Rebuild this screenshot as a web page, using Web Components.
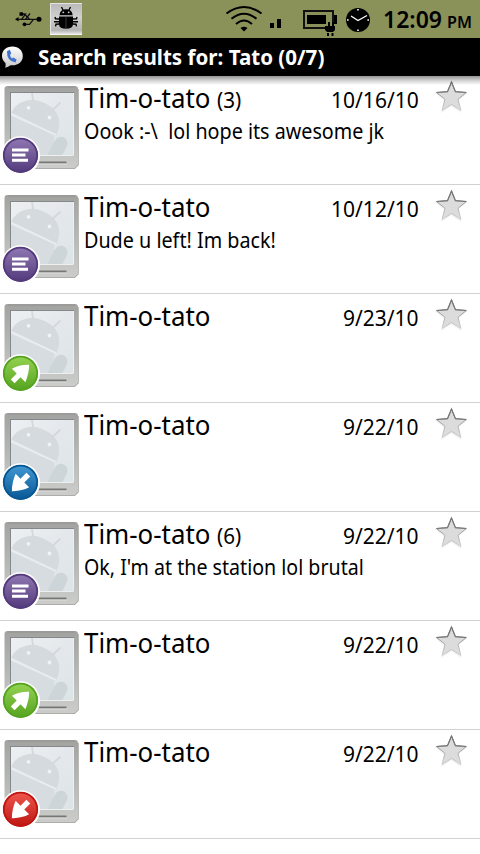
<!DOCTYPE html>
<html lang="en"><head><meta charset="utf-8"><title>Search results</title>
<style>body{margin:0;background:#fff}</style></head><body>
<phone-screen></phone-screen>
<script>
const define=(name,html,setup)=>customElements.define(name,class extends HTMLElement{
  connectedCallback(){
    if(this.shadowRoot)return;
    const t=document.createElement('template');
    t.innerHTML=typeof html==='function'?html(this):html;
    this.attachShadow({mode:'open'}).appendChild(t.content.cloneNode(true));
    if(setup)setup(this);
  }
});

/* One line of text, condensed to the width given in its "w" attribute. */
define('fit-text',e=>`<style>:host{display:inline-block;white-space:pre;width:${e.getAttribute('w')}px}
span{display:inline-block;transform-origin:0 50%}</style><span>${e.getAttribute('text')}</span>`,e=>{
  const s=e.shadowRoot.querySelector('span');
  s.style.transform=`scaleX(${+e.getAttribute('w')/s.offsetWidth})`;
});

define('status-bar',`<style>
:host{display:flex;height:38px;background:#8a9159;color:#000;font-weight:700;box-sizing:border-box}
svg{flex:none;display:block}.time{margin-left:7px;display:flex;align-items:baseline;line-height:38px;font-size:23px;gap:5px;font-weight:650}.pm{font-size:15.5px;font-weight:600}
</style>
<svg width="376" height="38" viewBox="0 0 376 38">
 <defs><linearGradient id="g" x1="0" y1="0" x2="0" y2="1"><stop offset="0" stop-color="#b9b9b9"/><stop offset=".45" stop-color="#d0d0d0"/><stop offset=".85" stop-color="#b4b4b4"/><stop offset="1" stop-color="#f4f4f4"/></linearGradient></defs>
 <g fill="none" stroke="#111" stroke-width="1.3"><path d="M17 19.3H38M21.5 19.3L25.500 14.200H21M25.500 19.300L30 13.500"/><path d="M22 14.200H24.500L29.500 19.300M25 24.300H29.500L33.500 19.300"/></g>
 <path d="M15 19.300L18.500 17V21.600Z"/><circle cx="39" cy="19.300" r="2.500"/><rect x="19.500" y="12.300" width="3.500" height="3.500"/><circle cx="24.500" cy="24.300" r="1.900"/>
 <rect x="50" y="3" width="32" height="32" fill="url(#g)"/><path d="M50.500 35V3.500H82" stroke="#e4e4e4" fill="none"/><path d="M50 34.500H82" stroke="#f5f5f5"/>
 <path d="M59.500 15.200Q60 9.300 66 9.300Q72 9.300 72.700 15.200ZM59 16.500H73V24.500Q72.500 28.800 66 28.800Q59.500 28.800 59 24.500Z"/>
 <path d="M61.500 7L63 10M70.500 7L69 10M59 19L55.500 18.800L55 17M59 21.700H54M59 24L56 24.200L55.500 26.300M73 19L76.500 18.800L77 17M73 21.700H78M73 24L76 24.200L76.500 26.300" stroke="#000" stroke-width="1.400" fill="none"/>
 <path d="M66 17V28.500" stroke="#777" stroke-width=".5"/><circle cx="63.300" cy="12.300" r=".9" fill="#ccc"/><circle cx="68.700" cy="12.300" r=".9" fill="#ccc"/>
 <g fill="none" stroke="#000" stroke-width="2"><path d="M226.500 13.500Q244 .5 261.500 13.500"/><path d="M231.500 18.800Q244 8.700 256.500 18.800"/><path d="M236 24Q244 17 252 24"/></g>
 <path d="M240.500 28Q244 25.500 247.500 28L244 31.500Z"/>
 <path d="M270 23H274V28H270ZM277 19H281V28H277Z"/>
 <rect x="304" y="11" width="29" height="17" fill="none" stroke="#111" stroke-width="2"/><rect x="307" y="15" width="19" height="9"/><rect x="334" y="15" width="3" height="9"/>
 <path d="M328 22H330V26H332V22H334V26H335V30L333 32H327L325 30V26H328Z"/><path d="M327 33H329V36H327ZM331.500 33H333.500V36H331.500Z"/>
 <circle cx="358" cy="20" r="12"/><path d="M351 16L358 20.500L367 15.500" fill="none" stroke="#fff" stroke-width="1.300"/>
 <path d="M357.200 9H358.800V10.600H357.200ZM357.200 29.400H358.800V31H357.200ZM347 19.200H348.600V20.800H347ZM367.400 19.200H369V20.800H367.400Z" fill="#fff"/>
</svg>
<div class="time"><fit-text text="12:09" w="59"></fit-text><fit-text class="pm" text="PM" w="25"></fit-text></div>`);

define('title-bar',`<style>
:host{display:flex;align-items:center;height:38px;background:#000;color:#fff;font-weight:700;font-size:21px;gap:14px}
svg{flex:none}fit-text{line-height:38px}
</style>
<svg width="24" height="38" viewBox="0 0 24 38"><defs><linearGradient id="b" x1="0" y1="0" x2="0" y2="1"><stop offset="0" stop-color="#fff"/><stop offset="1" stop-color="#c8c8c8"/></linearGradient></defs>
<path d="M12.500 8.500C6 8.500 2 12.500 2 18Q2 22 5.500 25Q6 28 5 29.800Q8.500 29 10.500 27.200C18 28 22.800 24 22.800 18C22.800 12.500 18.500 8.500 12.500 8.500Z" fill="url(#b)"/>
<path d="M7 13.200Q6.500 23 15.500 24.500L16.600 21.500L13.300 19.500L12 20.600Q10.300 19 10 16.700L11.300 15.500L9.800 11.700Z" fill="#3f73d0"/></svg>
<fit-text text="Search results for: Tato (0/7)" w="286"></fit-text>`);

const arrow='M-9 5.500L-3.500 0L-8 -4.500Q-1 -8.300 8 -8Q8 0 4.500 8L0 3.500L-5.500 9Z';
const kinds={
 sms:['#8f78b2','#533a7c','<path d="M-8.500 -7H8V-4H-8.500ZM-8.500 -1.900H5V1.100H-8.500ZM-8.500 3.200H7.500V6.200H-8.500Z" fill="#fff"/>'],
 out:['#95d352','#55a320',`<path d="${arrow}" fill="#fff" transform="scale(1.08)"/>`],
 in:['#4399d3','#075794',`<path d="${arrow}" fill="#fff" transform="rotate(180) scale(1.08)"/>`],
 missed:['#f0574e','#be1612',`<path d="${arrow}" fill="#fff" transform="rotate(180) scale(1.08)"/>`]};

define('contact-badge',e=>{const [a,b,glyph]=kinds[e.getAttribute('kind')];return `<style>:host{display:block;width:84px;height:108px}svg{display:block}</style>
<svg width="84" height="108" viewBox="0 0 84 108"><defs>
<linearGradient id="f" x1="0" y1="0" x2="0" y2="1"><stop offset="0" stop-color="#a2a3a0"/><stop offset=".5" stop-color="#b6b8b5"/><stop offset="1" stop-color="#cccdca"/></linearGradient>
<linearGradient id="p" x1="0" y1="0" x2="1" y2="1"><stop offset="0" stop-color="#edf0f2"/><stop offset=".5" stop-color="#e4e8ec"/><stop offset="1" stop-color="#dce4e8"/></linearGradient>
<linearGradient id="c" x1="0" y1="0" x2="0" y2="1"><stop offset="0" stop-color="${a}"/><stop offset="1" stop-color="${b}"/></linearGradient>
<clipPath id="k"><rect x="11" y="17" width="62.500" height="62"/></clipPath></defs>
<path d="M7 92.500H74.500L78 89V13" fill="none" stroke="#8d8e8a" stroke-width="1.200"/>
<path d="M7.500 10H75Q78 10 78 13V89L74.500 92.500H7Q4.500 92.500 4.500 90V13Q4.500 10 7.500 10Z" fill="url(#f)"/>
<path d="M8 11H75" stroke="#999" stroke-width="1.500"/>
<rect x="10.500" y="16.500" width="63" height="63" fill="#fff" stroke="#85888a"/>
<path d="M73.500 17V79.500H11" fill="none" stroke="#eef0f0"/>
<rect x="11" y="17" width="62" height="62" fill="url(#p)"/>
<g clip-path="url(#k)"><path d="M11 37.500Q15 27 27 24.500Q34 22.500 42 26Q57 32 59 44Q60 51 56 60L53.500 58.500L11 37.500Z" fill="#d5dade"/>
<path d="M11 39.500L54.500 59.500Q54 72 48 80H11Z" fill="#d7dce0"/><path d="M11 37.500L56 59" stroke="#e9edf0" stroke-width="1.500"/><path d="M47 80L54 66Q57 60 63 61Q69 64 67 70L62 80Z" fill="#ced5d9"/>
<path d="M33 24L32 17M52.500 34L60 27" stroke="#d3d8dc" stroke-width="1.800" stroke-linecap="round"/>
<circle cx="28.500" cy="31.800" r="1.900" fill="#f0f3f5"/><circle cx="49.500" cy="41.500" r="1.900" fill="#f0f3f5"/></g>
<path d="M35 85.500H66.500V87.500H35Z" fill="#777875"/><path d="M35 88H67" stroke="#ddd"/>
<circle cx="20.500" cy="79.700" r="19.500" fill="#fff"/><circle cx="20.500" cy="79.300" r="17.300" fill="url(#c)"/><circle cx="20.500" cy="79.300" r="16.700" fill="none" stroke="${b}" stroke-width="1.800"/>
<g transform="translate(20.500 79.500)">${glyph}</g></svg>`});

define('star-icon',`<style>:host{display:block;width:34px;height:36px}svg{display:block}</style>
<svg width="34" height="36" viewBox="0 0 34 36"><defs><linearGradient id="s" x1="0" y1="0" x2="0" y2="1"><stop offset="0" stop-color="#626262"/><stop offset=".55" stop-color="#aaa"/><stop offset="1" stop-color="#d0d0d0"/></linearGradient></defs>
<path d="M17 1L21.300 12H33.500L24 20L27.500 32.500L17 25.500L7 32.500L10 20L.5 12H12.500Z" fill="#f2f2f2" transform="translate(0 .8)"/>
<path d="M17.500 2L21.300 11.700L32.300 12.500L24 19.300L27 30.500L17.500 24.500L8 30.500L11 19.300L2.500 12.500L13.500 11.700Z" fill="#dcdcdc" stroke="url(#s)" stroke-width="1"/><path d="M2.500 12.500L13.500 11.700L17.500 2L21.500 11.700L32.300 12.500" fill="none" stroke="#777" stroke-width="1.200"/></svg>`);

define('result-row',e=>{const g=n=>e.getAttribute(n);return `<style>
:host{display:grid;grid-template-columns:84px 335px 1fr;height:108px;border-bottom:1px solid #d2d2d2;color:#000}
.head{display:flex;align-items:baseline;height:42px;line-height:44px;font-size:27px;gap:6px}
.small{font-size:21.500px}.date{margin-left:auto}.body{font-size:21.500px;line-height:25px;height:25px;display:flex}
star-icon{margin:4px 0 0 15px}
</style>
<contact-badge kind="${g('kind')}"></contact-badge>
<div><div class="head"><fit-text text="Tim-o-tato" w="126.5"></fit-text>${g('count')?`<fit-text class="small" text="(${g('count')})" w="24"></fit-text>`:''}<fit-text class="small date" text="${g('date')}" w="${g('date').length>7?88:76}"></fit-text></div>
${g('body')?`<div class="body"><fit-text text="${g('body')}" w="${g('bw')}"></fit-text></div>`:''}</div>
<star-icon></star-icon>`});

define('result-list',`<style>:host{display:block;position:relative;flex:1}
.shade{position:absolute;inset:0 0 auto;height:9px;background:linear-gradient(rgba(0,0,0,.42),rgba(0,0,0,.2) 45%,rgba(0,0,0,0))}</style><slot></slot><div class="shade"></div>`);

define('phone-screen',`<style>:host{display:flex;flex-direction:column;width:480px;height:854px;overflow:hidden;background:#fff;font-family:"Noto Sans","Open Sans",sans-serif}</style>
<status-bar></status-bar><title-bar></title-bar>
<result-list>
<result-row kind="sms" count="3" date="10/16/10" body="Oook :-\\  lol hope its awesome jk" bw="300"></result-row>
<result-row kind="sms" date="10/12/10" body="Dude u left! Im back!" bw="192"></result-row>
<result-row kind="out" date="9/23/10"></result-row>
<result-row kind="in" date="9/22/10"></result-row>
<result-row kind="sms" count="6" date="9/22/10" body="Ok, I'm at the station lol brutal" bw="280"></result-row>
<result-row kind="out" date="9/22/10"></result-row>
<result-row kind="missed" date="9/22/10"></result-row>
</result-list>`);
</script></body></html>
